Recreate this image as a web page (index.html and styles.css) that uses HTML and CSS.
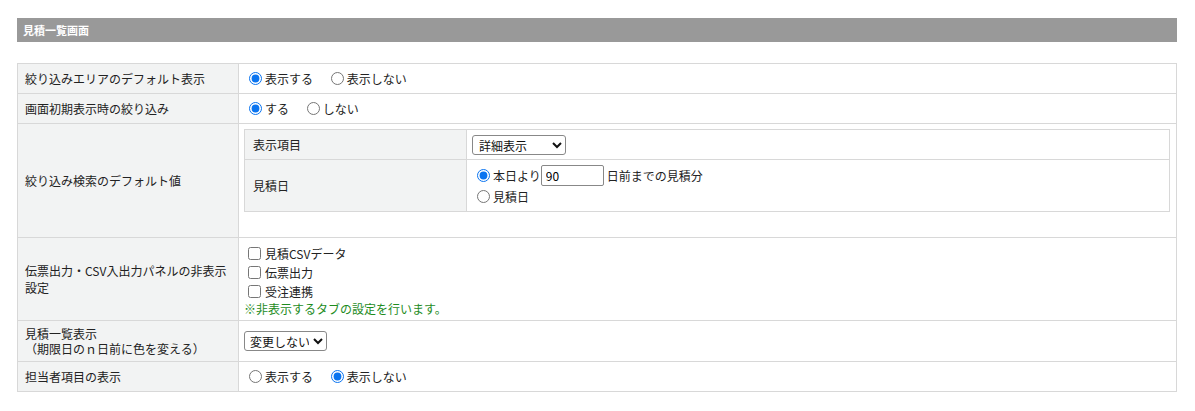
FILE: index.html
```html
<!DOCTYPE html>
<html lang="ja">
<head>
<meta charset="utf-8">
<link rel="stylesheet" href="styles.css">
</head>
<body>
<div class="page">
  <div class="title-bar">見積一覧画面</div>
  <table class="settings">
    <tr class="r30">
      <th>絞り込みエリアのデフォルト表示</th>
      <td>
        <label class="opt"><input type="radio" name="a" checked>表示する</label>
        <label class="opt"><input type="radio" name="a">表示しない</label>
      </td>
    </tr>
    <tr class="r30">
      <th>画面初期表示時の絞り込み</th>
      <td>
        <label class="opt"><input type="radio" name="b" checked>する</label>
        <label class="opt"><input type="radio" name="b">しない</label>
      </td>
    </tr>
    <tr class="r-search">
      <th>絞り込み検索のデフォルト値</th>
      <td class="nested-cell">
        <table class="inner">
          <tr class="r30">
            <th>表示項目</th>
            <td><select class="sel-detail"><option>詳細表示</option></select></td>
          </tr>
          <tr class="r-date">
            <th>見積日</th>
            <td>
              <div class="line"><label class="opt tight"><input type="radio" name="c" checked>本日より</label><input type="text" class="days" value="90"><span class="after">日前までの見積分</span></div>
              <div class="line"><label class="opt"><input type="radio" name="c">見積日</label></div>
            </td>
          </tr>
        </table>
      </td>
    </tr>
    <tr class="r-panel">
      <th><span class="nowrap">伝票出力・CSV入出力パネルの非表示</span><br>設定</th>
      <td class="checks">
        <label class="chk"><input type="checkbox">見積CSVデータ</label>
        <label class="chk"><input type="checkbox">伝票出力</label>
        <label class="chk"><input type="checkbox">受注連携</label>
        <div class="note">※非表示するタブの設定を行います。</div>
      </td>
    </tr>
    <tr class="r-color">
      <th>見積一覧表示<br>（期限日のｎ日前に色を変える）</th>
      <td class="sel-cell"><select class="sel-change"><option>変更しない</option></select></td>
    </tr>
    <tr class="r30">
      <th>担当者項目の表示</th>
      <td>
        <label class="opt"><input type="radio" name="d">表示する</label>
        <label class="opt"><input type="radio" name="d" checked>表示しない</label>
      </td>
    </tr>
  </table>
</div>
</body>
</html>
```

FILE: styles.css
```css
html, body {
  margin: 0;
  padding: 0;
  background: #fff;
}
body {
  font-family: "Noto Sans CJK JP", "Noto Sans", "Liberation Sans", sans-serif;
  font-size: 12px;
  color: #222;
}
.page {
  padding: 18px 18px 0 17px;
}
.title-bar {
  height: 24px;
  line-height: 24px;
  background: #999;
  color: #fff;
  font-weight: bold;
  font-size: 11px;
  padding-left: 6px;
  box-sizing: border-box;
}
.settings {
  margin-top: 21px;
  width: 100%;
  border-collapse: collapse;
  table-layout: fixed;
}
.settings th, .settings td {
  border: 1px solid #d8d8d8;
  font-weight: normal;
  text-align: left;
  vertical-align: middle;
  line-height: 17px;
}
.settings > tbody > tr > th {
  width: 221px;
  box-sizing: border-box;
  background: #f2f3f3;
  padding: 0 6px 0 7px;
}
.settings > tbody > tr > td {
  padding: 0 6px 0 5px;
}
.r30 > th, .r30 > td {
  height: 30px;
  box-sizing: border-box;
}
.opt {
  display: inline-flex;
  align-items: center;
  margin-right: 10px;
}
.opt.tight {
  margin-right: 0;
}
.opt input[type="radio"] {
  width: 13px;
  height: 13px;
  margin: 0 3px 0 5px;
  accent-color: #0a74f0;
}
.nested-cell {
  vertical-align: top !important;
  padding: 5px 6px 25px 5px !important;
}
.r-search > th {
  height: 114px;
  box-sizing: border-box;
}
.inner {
  width: 100%;
  border-collapse: collapse;
  table-layout: fixed;
}
.inner th, .inner td {
  border: 1px solid #d8d8d8;
  font-weight: normal;
  text-align: left;
  vertical-align: middle;
}
.inner th {
  width: 222px;
  box-sizing: border-box;
  background: #f2f3f3;
  padding: 0 8px;
}
.inner td {
  padding: 0 5px;
}
.r-date > th, .r-date > td {
  height: 52px;
  box-sizing: border-box;
}
.line {
  display: flex;
  align-items: center;
  height: 20px;
}
.line + .line {
  margin-top: 1px;
}
.sel-detail {
  width: 94px;
  height: 20px;
  font-family: inherit;
  font-size: 12px;
  color: #111;
  border: 1px solid #888;
  border-radius: 3px;
  background: #fff;
  padding: 0 2px;
}
.days {
  width: 63px;
  height: 21px;
  box-sizing: border-box;
  border: 1px solid #888;
  border-radius: 2px;
  font-family: inherit;
  font-size: 12px;
  padding: 0 4px;
  margin: 0;
}
.after {
  margin-left: 3px;
}
.checks {
  padding-top: 5px !important;
  padding-bottom: 3px !important;
}
.r-panel > th {
  height: 83px;
  box-sizing: border-box;
}
.chk {
  display: flex;
  align-items: center;
  height: 19px;
}
.chk input[type="checkbox"] {
  width: 13px;
  height: 13px;
  margin: 0 4px 0 4px;
}
.note {
  color: #1e8c1e;
  line-height: 15px;
}
.nowrap {
  white-space: nowrap;
}
.r-color > th {
  height: 41px;
  box-sizing: border-box;
  line-height: 15px;
}
.sel-cell {
  padding-left: 5px !important;
}
.sel-change {
  width: 83px;
  height: 20px;
  font-family: inherit;
  font-size: 12px;
  color: #111;
  border: 1px solid #888;
  border-radius: 3px;
  background: #fff;
  padding: 0 1px;
}
```
